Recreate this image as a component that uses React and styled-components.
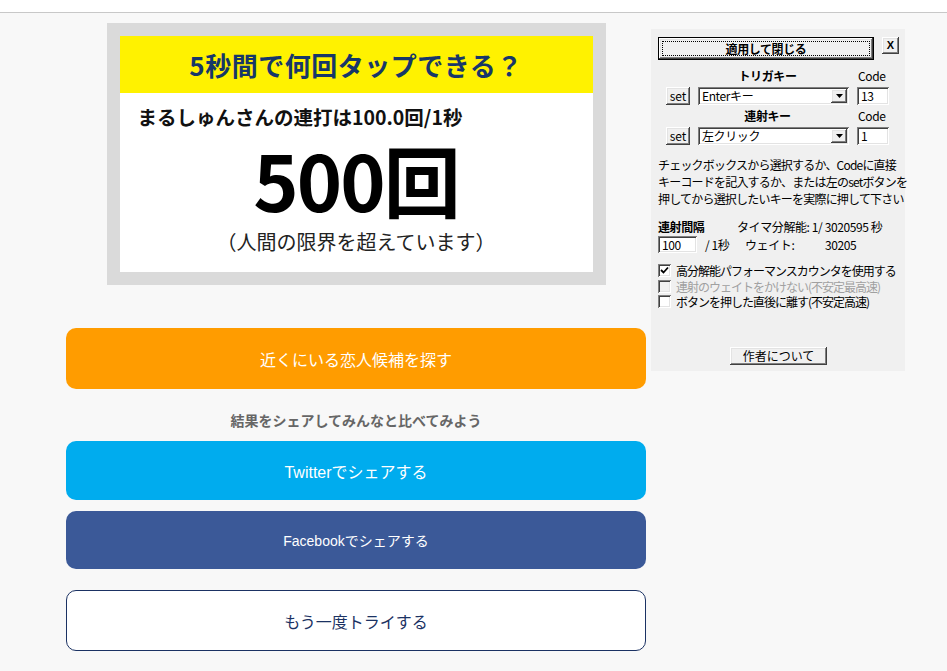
import React from "react";
import styled, { createGlobalStyle, css } from "styled-components";

const GlobalStyle = createGlobalStyle`
    html, body {
        margin: 0;
        padding: 0;
        background: #f8f8f8;
    }
    * {
        box-sizing: border-box;
    }
`;

const cjk = `"Noto Sans CJK JP", "Noto Sans", sans-serif`;
const web = `"Liberation Sans", "Noto Sans CJK JP", sans-serif`;

const Header = styled.div`
    height: 13px;
    background: #ffffff;
    border-bottom: 1px solid #c8c8c8;
`;

const Main = styled.div`
    display: flex;
    align-items: flex-start;
    padding-left: 66px;
`;

const LeftCol = styled.div`
    width: 580px;
    display: flex;
    flex-direction: column;
    padding-top: 10px;
`;

/* result image */
const ResultCard = styled.div`
    width: 499px;
    height: 262px;
    margin: 0 auto;
    padding: 13px;
    background: #dadada;
`;

const CardInner = styled.div`
    height: 100%;
    background: #ffffff;
    display: flex;
    flex-direction: column;
    font-family: ${cjk};
`;

const Banner = styled.div`
    height: 57px;
    background: #fff200;
    color: #173769;
    font-size: 26px;
    font-weight: 700;
    display: flex;
    align-items: center;
    justify-content: center;
    letter-spacing: 0.5px;
`;

const Rate = styled.div`
    margin-top: 12px;
    padding-left: 18px;
    font-size: 19.5px;
    line-height: 23px;
    font-weight: 700;
    color: #111;
`;

const Count = styled.div`
    margin-top: 12px;
    text-align: center;
    font-size: 77px;
    line-height: 77px;
    font-weight: 700;
    color: #000;
    letter-spacing: -2px;
`;

const Note = styled.div`
    margin-top: 13px;
    text-align: center;
    font-size: 20px;
    line-height: 23px;
    color: #222;
`;

/* action buttons */
const variants = {
    orange: css`
        background: #ff9c00;
        color: #fff;
        border: none;
    `,
    twitter: css`
        background: #00acee;
        color: #fff;
        border: none;
    `,
    facebook: css`
        background: #3b5998;
        color: #fff;
        border: none;
        font-size: 14px;
    `,
    outline: css`
        background: #fff;
        color: #1b3263;
        border: 1px solid #1b3263;
    `,
};

const ActionButton = styled.div`
    height: ${p => p.$h}px;
    margin-top: ${p => p.$mt}px;
    border-radius: 10px;
    display: flex;
    align-items: center;
    justify-content: center;
    font-family: ${web};
    font-size: 16px;
    ${p => variants[p.$variant]}
`;

const ShareLabel = styled.div`
    margin-top: 21px;
    text-align: center;
    font-family: ${cjk};
    font-size: 14px;
    line-height: 20px;
    font-weight: 700;
    color: #666;
`;

/* win32 dialog */
const raised = css`
    background: #f0f0f0;
    box-shadow: inset -1px -1px #404040, inset 1px 1px #ffffff,
        inset -2px -2px #808080, inset 2px 2px #e3e3e3;
`;

const sunken = css`
    background: #ffffff;
    box-shadow: inset 1px 1px #808080, inset -1px -1px #ffffff,
        inset 2px 2px #404040, inset -2px -2px #e3e3e3;
`;

const Dialog = styled.div`
    width: 254px;
    height: 342px;
    margin-left: 5px;
    margin-top: 16px;
    background: #f0f0f0;
    font-family: ${cjk};
    font-size: 12px;
    letter-spacing: -0.4px;
    color: #000;
    display: flex;
    flex-direction: column;
    padding: 8px 6px 6px 7px;
`;

const TopRow = styled.div`
    display: flex;
    align-items: flex-start;
    gap: 8px;
`;

const WinButton = styled.div`
    ${raised};
    width: ${p => p.$w}px;
    height: ${p => p.$h}px;
    display: flex;
    align-items: center;
    justify-content: center;
    font-size: 12px;
    line-height: 1;
    letter-spacing: 0;
    flex-shrink: 0;
`;

const DefaultButton = styled.div`
    width: 216px;
    height: 23px;
    border: 1px solid #000;
    display: flex;
`;

const DefaultFace = styled.div`
    ${raised};
    flex: 1;
    padding: 3px;
    display: flex;
`;

const FocusRing = styled.div`
    flex: 1;
    border: 1px dotted #000;
    display: flex;
    align-items: center;
    justify-content: center;
    font-weight: 700;
    font-size: 12px;
`;

const CloseGlyph = styled.span`
    font-family: "Liberation Sans", sans-serif;
    font-weight: 700;
    font-size: 11px;
`;

const KeyGrid = styled.div`
    display: grid;
    grid-template-columns: 24px 151px 32px;
    column-gap: 8px;
    margin-left: 8px;
    margin-top: ${p => p.$mt}px;
    align-items: center;
`;

const KeyLabel = styled.div`
    grid-column: 2;
    text-align: center;
    font-weight: 700;
    line-height: 14px;
    padding-right: 12px;
`;

const CodeLabel = styled.div`
    grid-column: 3;
    line-height: 14px;
    padding-left: 1px;
`;

const ControlRow = styled.div`
    grid-column: 1 / 4;
    display: grid;
    grid-template-columns: 24px 151px 32px;
    column-gap: 8px;
    margin-top: 4px;
    align-items: center;
`;

const Select = styled.div`
    ${sunken};
    height: 18px;
    display: flex;
    align-items: center;
    padding: 0 2px 0 4px;
`;

const SelectText = styled.span`
    flex: 1;
    line-height: 14px;
`;

const ArrowButton = styled.div`
    ${raised};
    width: 16px;
    height: 14px;
    display: flex;
    align-items: center;
    justify-content: center;
`;

const Field = styled.div`
    ${sunken};
    width: ${p => p.$w}px;
    height: ${p => p.$h}px;
    padding-left: 4px;
    display: flex;
    align-items: center;
    line-height: 14px;
    flex-shrink: 0;
`;

const HelpText = styled.p`
    margin: 11px 0 0 0;
    line-height: 17px;
    letter-spacing: -0.8px;
    white-space: nowrap;
`;

const InfoRow = styled.div`
    display: flex;
    align-items: center;
    margin-top: ${p => p.$mt}px;
    line-height: 16px;
`;

const Cell = styled.span`
    width: ${p => (p.$w ? `${p.$w}px` : "auto")};
    padding-left: ${p => p.$pl || 0}px;
    flex-shrink: 0;
    font-weight: ${p => (p.$bold ? 700 : 400)};
    white-space: nowrap;
`;

const CheckList = styled.div`
    display: flex;
    flex-direction: column;
    margin-top: 10px;
`;

const CheckRow = styled.label`
    display: flex;
    align-items: center;
    gap: 5px;
    height: 15.5px;
    line-height: 15px;
    letter-spacing: -1px;
    color: ${p => (p.$disabled ? "#a0a0a0" : "#000")};
    white-space: nowrap;
`;

const Box = styled.span`
    ${sunken};
    width: 13px;
    height: 13px;
    flex-shrink: 0;
    display: flex;
    align-items: center;
    justify-content: center;
    ${p => p.$disabled && css`background: #f0f0f0;`}
`;

const Footer = styled.div`
    margin-top: auto;
    display: flex;
    justify-content: center;
`;

const Arrow = () => (
    <svg width="7" height="4" viewBox="0 0 7 4">
        <path d="M0 0h7L3.5 4z" fill="#000" />
    </svg>
);

const Tick = () => (
    <svg width="9" height="9" viewBox="0 0 9 9">
        <path d="M1 4l2.5 2.5L8 1.5" stroke="#000" strokeWidth="1.8" fill="none" />
    </svg>
);

const KeyBlock = ({ label, value, code, mt }) => (
    <KeyGrid $mt={mt}>
        <KeyLabel>{label}</KeyLabel>
        <CodeLabel>{"Code"}</CodeLabel>
        <ControlRow>
            <WinButton $w={24} $h={18}>{"set"}</WinButton>
            <Select>
                <SelectText>{value}</SelectText>
                <ArrowButton><Arrow /></ArrowButton>
            </Select>
            <Field $w={32} $h={18}>{code}</Field>
        </ControlRow>
    </KeyGrid>
);

const Check = ({ checked, disabled, children }) => (
    <CheckRow $disabled={disabled}>
        <Box $disabled={disabled}>{checked && <Tick />}</Box>
        <span>{children}</span>
    </CheckRow>
);

const App = () => (
    <>
        <GlobalStyle />
        <Header />
        <Main>
            <LeftCol>
                <ResultCard>
                    <CardInner>
                        <Banner>{"5秒間で何回タップできる？"}</Banner>
                        <Rate>{"まるしゅんさんの連打は100.0回/1秒"}</Rate>
                        <Count>{"500回"}</Count>
                        <Note>{"（人間の限界を超えています）"}</Note>
                    </CardInner>
                </ResultCard>

                <ActionButton $variant="orange" $h={61} $mt={43}>
                    {"近くにいる恋人候補を探す"}
                </ActionButton>
                <ShareLabel>{"結果をシェアしてみんなと比べてみよう"}</ShareLabel>
                <ActionButton $variant="twitter" $h={59} $mt={11}>
                    {"Twitterでシェアする"}
                </ActionButton>
                <ActionButton $variant="facebook" $h={58} $mt={11}>
                    {"Facebookでシェアする"}
                </ActionButton>
                <ActionButton $variant="outline" $h={61} $mt={21}>
                    {"もう一度トライする"}
                </ActionButton>
            </LeftCol>

            <Dialog>
                <TopRow>
                    <DefaultButton>
                        <DefaultFace>
                            <FocusRing>{"適用して閉じる"}</FocusRing>
                        </DefaultFace>
                    </DefaultButton>
                    <WinButton $w={17} $h={17}><CloseGlyph>{"X"}</CloseGlyph></WinButton>
                </TopRow>

                <KeyBlock label="トリガキー" value="Enterキー" code="13" mt={9} />
                <KeyBlock label="連射キー" value="左クリック" code="1" mt={4} />

                <HelpText>
                    {"チェックボックスから選択するか、Codeに直接"}<br />
                    {"キーコードを記入するか、または左のsetボタンを"}<br />
                    {"押してから選択したいキーを実際に押して下さい"}
                </HelpText>

                <InfoRow $mt={12}>
                    <Cell $w={79} $bold>{"連射間隔"}</Cell>
                    <Cell>{"タイマ分解能: 1/  3020595 秒"}</Cell>
                </InfoRow>
                <InfoRow $mt={1}>
                    <Field $w={39} $h={17}>{"100"}</Field>
                    <Cell $w={48} $pl={8}>{"/ 1秒"}</Cell>
                    <Cell $w={80}>{"ウェイト:"}</Cell>
                    <Cell>{"30205"}</Cell>
                </InfoRow>

                <CheckList>
                    <Check checked>{"高分解能パフォーマンスカウンタを使用する"}</Check>
                    <Check disabled>{"連射のウェイトをかけない(不安定最高速)"}</Check>
                    <Check>{"ボタンを押した直後に離す(不安定高速)"}</Check>
                </CheckList>

                <Footer>
                    <WinButton $w={97} $h={18}>{"作者について"}</WinButton>
                </Footer>
            </Dialog>
        </Main>
    </>
);

export default App;
